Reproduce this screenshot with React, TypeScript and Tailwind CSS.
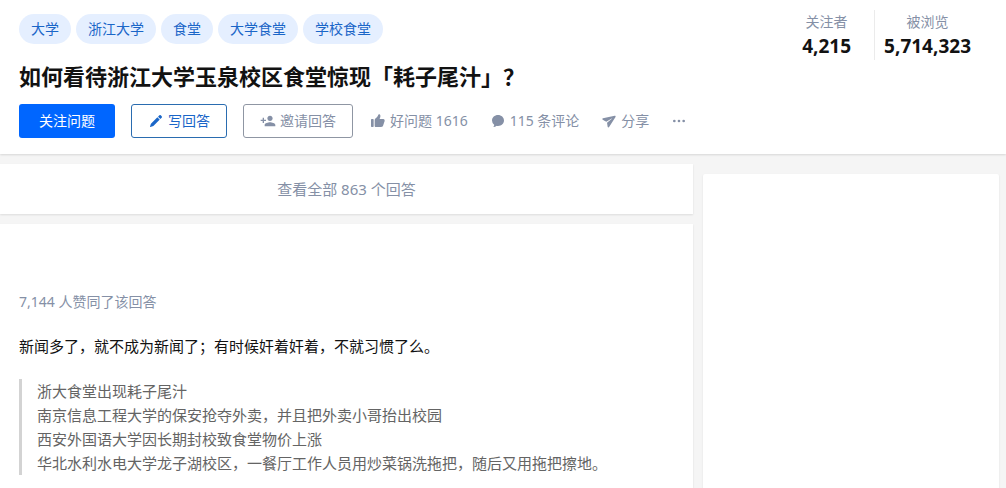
import React from "react";

const topics = ["大学", "浙江大学", "食堂", "大学食堂", "学校食堂"];

const stats = [
  { label: "关注者", value: "4,215" },
  { label: "被浏览", value: "5,714,323" },
];

const quotes = [
  "浙大食堂出现耗子尾汁",
  "南京信息工程大学的保安抢夺外卖，并且把外卖小哥抬出校园",
  "西安外国语大学因长期封校致食堂物价上涨",
  "华北水利水电大学龙子湖校区，一餐厅工作人员用炒菜锅洗拖把，随后又用拖把擦地。",
];

const icons = {
  pencil:
    "M4.076 16.966a4.19 4.19 0 0 1 1.05-1.76l8.568-8.569a.524.524 0 0 1 .741 0l2.928 2.927a.524.524 0 0 1 0 .74l-8.568 8.57c-.49.49-1.096.852-1.761 1.051l-3.528 1.058a.394.394 0 0 1-.49-.488l1.06-3.53zM20.558 4.83c.59.59.59 1.546 0 2.136l-1.693 1.692a.503.503 0 0 1-.712 0l-2.812-2.812a.504.504 0 0 1 0-.712l1.693-1.693a1.51 1.51 0 0 1 2.135 0l1.389 1.389z",
  invite:
    "M15 12c2.21 0 4-1.79 4-4s-1.79-4-4-4-4 1.79-4 4 1.79 4 4 4zm-9-2V7H4v3H1v2h3v3h2v-3h3v-2H6zm9 4c-2.67 0-8 1.34-8 4v2h16v-2c0-2.66-5.33-4-8-4z",
  like: "M14.445 9h5.387s2.997.154 1.95 3.669c-.168.51-2.346 6.911-2.346 6.911s-.763 1.416-2.86 1.416H8.989c-1.498 0-1.989-.996-1.989-1.996v-7.998c0-.987.336-2.032 1.114-2.639 4.45-3.773 3.436-4.597 4.45-5.83.985-1.13 3.2-.5 3.037 2.362C15.201 7.397 14.445 9 14.445 9zM2.500 9h2a1 1 0 0 1 1 1v10a1 1 0 0 1-1 1h-2a1 1 0 0 1-1-1V10a1 1 0 0 1 1-1z",
  comment:
    "M10.241 19.313a.97.97 0 0 0-.77.2 7.908 7.908 0 0 1-3.772 1.482.409.409 0 0 1-.38-.637 5.825 5.825 0 0 0 1.11-2.237.605.605 0 0 0-.227-.59A7.935 7.935 0 0 1 3 11.25C3 6.7 7.03 3 12 3s9 3.7 9 8.25-4.373 9.108-10.759 8.063z",
  share:
    "M2.931 7.89c-1.067.24-1.275 1.669-.318 2.207l5.277 2.908 8.168-4.776c.25-.127.477.198.273.39L9.05 14.66l.927 5.953c.18 1.084 1.593 1.376 2.182.456l9.644-15.242c.584-.892-.212-2.029-1.234-1.796L2.93 7.89z",
  more: "M5 14a2 2 0 1 1 0-4 2 2 0 0 1 0 4zm7 0a2 2 0 1 1 0-4 2 2 0 0 1 0 4zm7 0a2 2 0 1 1 0-4 2 2 0 0 1 0 4z",
};

const Icon = ({
  name,
  className = "size-4",
}: {
  name: keyof typeof icons;
  className?: string;
}) => (
  <svg viewBox="0 0 24 24" fill="currentColor" className={className} aria-hidden="true">
    <path d={icons[name]} />
  </svg>
);

const QuestionHeader = () => (
  <header className="flex items-start justify-between bg-white pb-4 pl-[19px] pr-[26px] shadow-[0_1px_2px_rgba(0,0,0,0.12)]">
    <div className="pt-[14px]">
      <div className="flex gap-[5px]">
        {topics.map((topic) => (
          <a
            key={topic}
            href="#"
            className="h-[30px] rounded-full bg-[#e5efff] px-3 text-sm leading-[30px] text-[#1a66c8]"
          >
            {topic}
          </a>
        ))}
      </div>
      <h1 className="mt-4 text-[22px] font-bold leading-8 text-[#121212]">
        如何看待浙江大学玉泉校区食堂惊现「耗子尾汁」？
      </h1>
      <div className="mt-3 flex items-center text-sm text-[#8590a6]">
        <div className="flex gap-4">
          <button className="h-[34px] w-24 rounded-[3px] bg-[#0066ff] text-white">
            关注问题
          </button>
          <button className="flex h-[34px] w-24 items-center justify-center gap-1 rounded-[3px] border border-[#2a6cb0] text-[#1a66c8]">
            <Icon name="pencil" />
            写回答
          </button>
          <button className="flex h-[34px] w-[110px] items-center justify-center gap-1 rounded-[3px] border border-[#8f96a3]">
            <Icon name="invite" />
            邀请回答
          </button>
        </div>
        <div className="ml-[17px] flex gap-[22px]">
          <button className="flex items-center gap-1">
            <Icon name="like" />
            好问题 1616
          </button>
          <button className="flex items-center gap-1">
            <Icon name="comment" />
            115 条评论
          </button>
          <button className="flex items-center gap-1">
            <Icon name="share" />
            分享
          </button>
          <button aria-label="更多" className="flex items-center">
            <Icon name="more" />
          </button>
        </div>
      </div>
    </div>
    <dl className="mt-[10px] flex divide-x divide-[#ebebeb] text-center">
      {stats.map((stat) => (
        <div key={stat.label} className="h-[50px] min-w-24 px-[9px]">
          <dt className="text-sm leading-6 text-[#8590a6]">{stat.label}</dt>
          <dd className="text-[19px] font-bold leading-6 text-[#121212]">{stat.value}</dd>
        </div>
      ))}
    </dl>
  </header>
);

const Answer = () => (
  <article className="flex-1 bg-white px-[19px] pt-[68px] pb-3 shadow-[0_1px_2px_rgba(0,0,0,0.1)]">
    <p className="text-sm text-[#8590a6]">7,144 人赞同了该回答</p>
    <p className="mt-[22px] text-[15px] leading-6 text-[#121212]">
      新闻多了，就不成为新闻了；有时候奸着奸着，不就习惯了么。
    </p>
    <blockquote className="mt-[21px] border-l-[3px] border-[#d3d3d3] pl-[15px] text-[15px] leading-6 text-[#646464]">
      {quotes.map((line) => (
        <p key={line}>{line}</p>
      ))}
    </blockquote>
  </article>
);

const App = () => {
  return (
    <div className="flex min-h-screen flex-col bg-[#f5f5f5] font-['Noto_Sans','Noto_Sans_CJK_SC',sans-serif] [text-spacing-trim:space-all]">
      <QuestionHeader />
      <div className="flex flex-1 gap-[10px] pr-[7px] pt-[10px]">
        <main className="flex flex-1 flex-col gap-[10px]">
          <a
            href="#"
            className="block bg-white text-center text-[15px] leading-[50px] text-[#8590a6] shadow-[0_1px_2px_rgba(0,0,0,0.1)]"
          >
            查看全部 863 个回答
          </a>
          <Answer />
        </main>
        <aside className="mt-[10px] w-[296px] rounded-t-[2px] bg-white shadow-[0_1px_2px_rgba(0,0,0,0.1)]" />
      </div>
    </div>
  );
};

export default App;
